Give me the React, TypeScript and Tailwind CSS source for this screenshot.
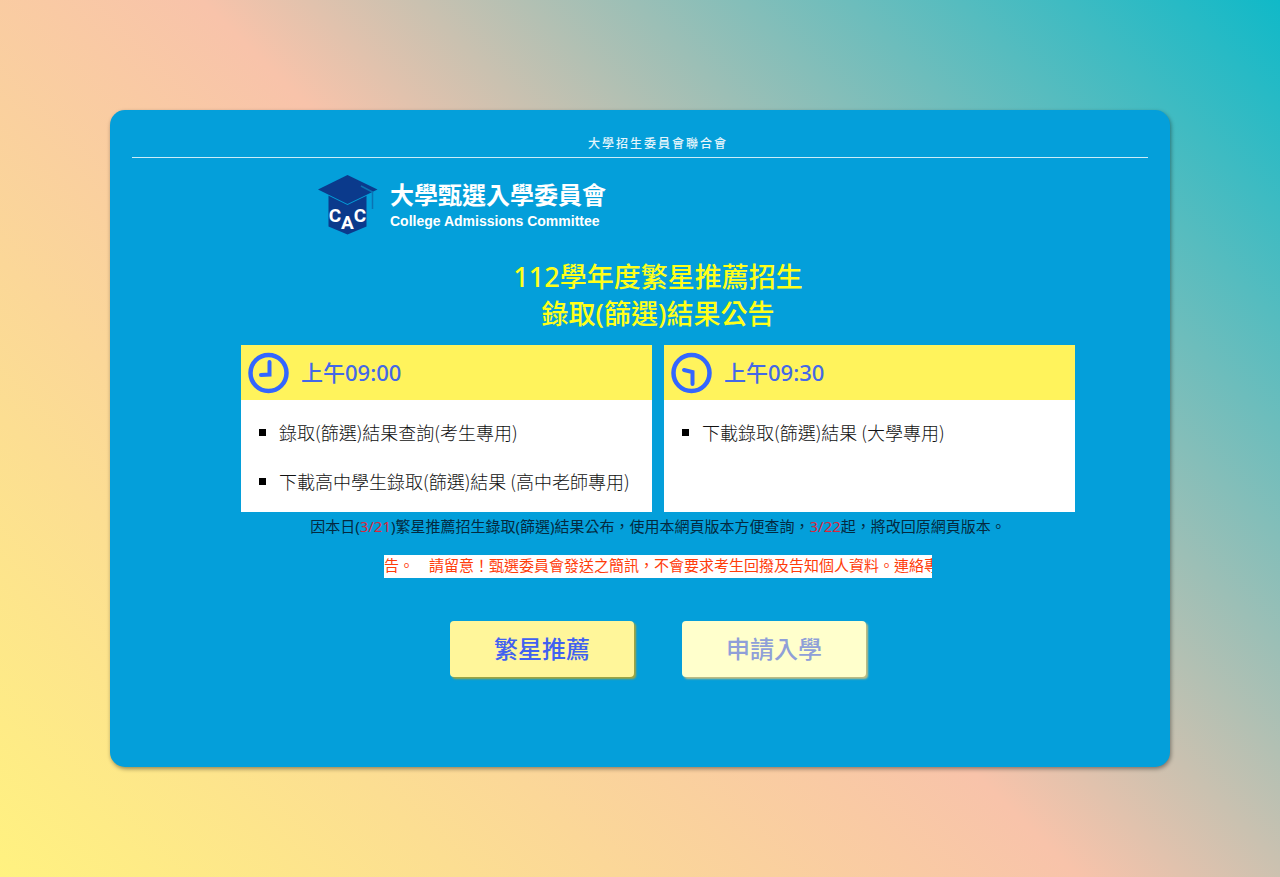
import * as React from 'react';

// ── Schedule data ─────────────────────────────────────────────────────────────
interface Slot {
  id: string;
  time: string;
  hands: string;
  links: string[];
}

const SLOTS: Slot[] = [
  {
    id: 'nine',
    time: '上午09:00',
    hands: 'M21.500 10V22.500L13 23',
    links: ['錄取(篩選)結果查詢(考生專用)', '下載高中學生錄取(篩選)結果 (高中老師專用)'],
  },
  {
    id: 'nine-thirty',
    time: '上午09:30',
    hands: 'M13 18L21.500 20V32',
    links: ['下載錄取(篩選)結果 (大學專用)'],
  },
];

// ── Logo ──────────────────────────────────────────────────────────────────────
function Logo() {
  return (
    <div className="flex items-center gap-3">
      <svg viewBox="0 0 60 60" className="size-[60px] shrink-0" aria-hidden="true">
        <path d="M10.500 20V51.500L29.500 59.500L48.500 51.500V20Z" fill="#0b3a8c" />
        <path d="M0 15.500L29.500 0L59.500 15.500L29.500 30Z" fill="#049fda" />
        <path d="M0 14.500L29.500 0L59.500 14.500L29.500 29Z" fill="#0b3a8c" />
        <path d="M43 11L54.500 17V34" fill="none" stroke="#0b73b3" strokeWidth="1.500" />
        <g
          fill="#fff"
          fontFamily="Roboto, 'Liberation Sans', sans-serif"
          fontWeight="700"
          fontSize="19"
          textAnchor="middle"
        >
          <text x="17" y="47">C</text>
          <text x="29.500" y="54">A</text>
          <text x="42" y="47">C</text>
        </g>
      </svg>
      <div className="flex flex-col text-white">
        <span className="text-[24px] leading-[32px] font-bold">大學甄選入學委員會</span>
        <span className="font-['Liberation_Sans',sans-serif] text-[14px] leading-5 font-bold">
          College Admissions Committee
        </span>
      </div>
    </div>
  );
}

function Clock({ hands }: { hands: string }) {
  return (
    <svg
      viewBox="0 0 42 42"
      className="size-[42px] shrink-0"
      fill="none"
      stroke="#3366ff"
      aria-hidden="true"
    >
      <circle cx="20.500" cy="21" r="18" strokeWidth="4.500" />
      <path d={hands} strokeWidth="4" strokeLinecap="round" />
    </svg>
  );
}

// ── Result card ───────────────────────────────────────────────────────────────
function SlotCard({ slot }: { slot: Slot }) {
  return (
    <section className="bg-white">
      <h2 className="flex h-[55px] items-center gap-[11px] bg-[#fff35c] pl-[7px] text-[22px] font-medium text-[#4468e8]">
        <Clock hands={slot.hands} />
        {slot.time}
      </h2>
      <ul className="flex flex-col gap-6 pt-5 pb-[18px]">
        {slot.links.map((label) => (
          <li key={label} className="flex items-center gap-[13px] pl-[18px]">
            <span className="size-[7px] shrink-0 bg-black" />
            <a
              href="#"
              className="font-['Noto_Sans_CJK_TC',sans-serif] text-[18px] leading-[25px] font-light text-[#111]"
            >
              {label}
            </a>
          </li>
        ))}
      </ul>
    </section>
  );
}

// ── Page ──────────────────────────────────────────────────────────────────────
export default function App() {
  return (
    <div className="min-h-screen bg-[linear-gradient(45deg,#fff280_0%,#f8c3aa_50%,#10b9c8_100%)] p-[110px] font-['Noto_Sans','Noto_Sans_CJK_TC',sans-serif]">
      <main className="rounded-[15px] bg-[#049fda] px-[22px] pt-6 pb-[90px] shadow-[1px_2px_4px_rgba(0,0,0,0.4)]">
        <header className="border-b border-white/80 pb-[3px] pl-9 text-center text-[12px] leading-5 font-medium tracking-[2px] text-white/90">
          大學招生委員會聯合會
        </header>

        <div className="pl-9">
          <div className="mx-auto mt-[17px] w-full max-w-[680px]">
            <Logo />
          </div>

          <h1 className="mt-[23px] text-center text-[27px] leading-[37px] font-medium text-[#ffff19]">
            112學年度繁星推薦招生
            <br />
            錄取(篩選)結果公告
          </h1>

          <div className="mx-auto mt-[13px] grid w-full max-w-[834px] grid-cols-2 gap-3">
            {SLOTS.map((slot) => (
              <SlotCard key={slot.id} slot={slot} />
            ))}
          </div>

          <p className="mt-[3px] text-center text-[15px] leading-[22px] text-[#042a40]">
            因本日(<span className="text-[#d8283e]">3/21</span>
            )繁星推薦招生錄取(篩選)結果公布，使用本網頁版本方便查詢，
            <span className="text-[#d8283e]">3/22</span>起，將改回原網頁版本。
          </p>

          <div className="mx-auto mt-[18px] w-full max-w-[548px] overflow-hidden bg-white pb-[3px] text-[15px] leading-5 whitespace-nowrap text-[#ff3c0a]">
            告。　請留意！甄選委員會發送之簡訊，不會要求考生回撥及告知個人資料。連絡專線
          </div>

          <div className="mt-[43px] flex justify-center gap-12">
            <button
              type="button"
              className="h-14 w-[184px] rounded-[4px] bg-[#fff69a] text-[24px] font-medium text-[#4161f0] shadow-[2px_2px_2px_#a5a53c]"
            >
              繁星推薦
            </button>
            <button
              type="button"
              className="h-14 w-[184px] rounded-[4px] bg-[#ffffcc] text-[24px] font-medium text-[#8f9fd8] shadow-[2px_2px_2px_#c4bd80]"
            >
              申請入學
            </button>
          </div>
        </div>
      </main>
    </div>
  );
}
